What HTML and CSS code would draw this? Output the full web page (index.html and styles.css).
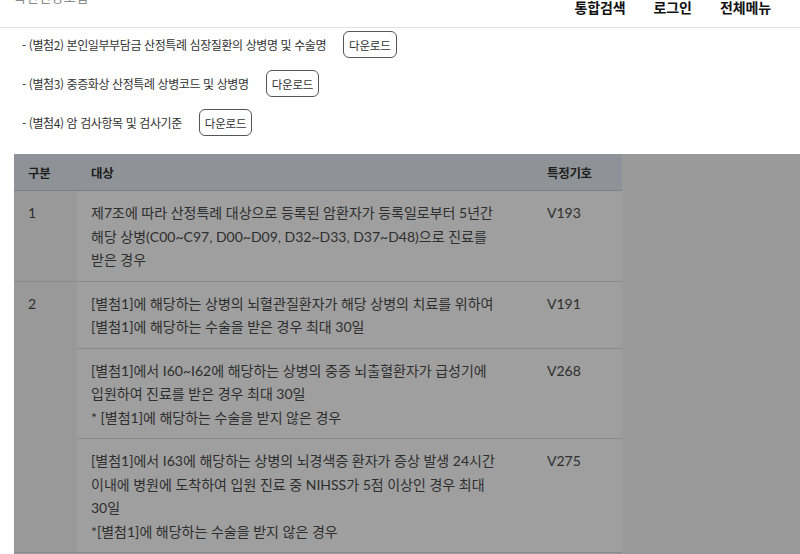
FILE: index.html
```html
<!DOCTYPE html>
<html lang="ko">
<head>
<meta charset="utf-8">
<title>산정특례</title>
<link rel="stylesheet" href="styles.css">
</head>
<body>
<header class="topbar">
  <div class="logo">국민건강보험</div>
  <nav class="gnb">
    <a class="gnb-item">통합검색</a>
    <a class="gnb-item">로그인</a>
    <a class="gnb-item">전체메뉴</a>
  </nav>
</header>
<ul class="files">
  <li class="file"><span class="file-name">- (별첨2) 본인일부부담금 산정특례 심장질환의 상병명 및 수술명</span><button class="btn">다운로드</button></li>
  <li class="file"><span class="file-name">- (별첨3) 중증화상 산정특례 상병코드 및 상병명</span><button class="btn">다운로드</button></li>
  <li class="file"><span class="file-name">- (별첨4) 암 검사항목 및 검사기준</span><button class="btn">다운로드</button></li>
</ul>
<section class="dim">
  <table class="tbl">
    <colgroup><col class="c1"><col class="c2"><col class="c3"></colgroup>
    <thead>
      <tr><th>구분</th><th>대상</th><th>특정기호</th></tr>
    </thead>
    <tbody>
      <tr>
        <td class="no">1</td>
        <td>제7조에 따라 산정특례 대상으로 등록된 암환자가 등록일로부터 5년간<br>해당 상병(C00~C97, D00~D09, D32~D33, D37~D48)으로 진료를<br>받은 경우</td>
        <td>V193</td>
      </tr>
      <tr>
        <td class="no" rowspan="3">2</td>
        <td>[별첨1]에 해당하는 상병의 뇌혈관질환자가 해당 상병의 치료를 위하여<br>[별첨1]에 해당하는 수술을 받은 경우 최대 30일</td>
        <td>V191</td>
      </tr>
      <tr>
        <td>[별첨1]에서 I60~I62에 해당하는 상병의 중증 뇌출혈환자가 급성기에<br>입원하여 진료를 받은 경우 최대 30일<br>* [별첨1]에 해당하는 수술을 받지 않은 경우</td>
        <td>V268</td>
      </tr>
      <tr>
        <td>[별첨1]에서 I63에 해당하는 상병의 뇌경색증 환자가 증상 발생 24시간<br>이내에 병원에 도착하여 입원 진료 중 NIHSS가 5점 이상인 경우 최대<br>30일<br>*[별첨1]에 해당하는 수술을 받지 않은 경우</td>
        <td>V275</td>
      </tr>
    </tbody>
  </table>
</section>
</body>
</html>
```

FILE: styles.css
```css
html, body {
  margin: 0;
  padding: 0;
  background: #ffffff;
  font-family: Lato, "Noto Sans CJK KR", sans-serif;
  color: #333;
  overflow: hidden;
}

.topbar {
  display: flex;
  justify-content: space-between;
  align-items: flex-start;
  height: 28px;
  border-bottom: 1px solid #e2e2e2;
  box-sizing: border-box;
  padding: 0 29px 0 14px;
  overflow: hidden;
}

.logo {
  margin-top: -11px;
  font-size: 13px;
  line-height: 16px;
  color: #8a8a8a;
  letter-spacing: 0.5px;
}

.gnb {
  display: flex;
  gap: 28px;
  margin-top: -1px;
}

.gnb-item {
  font-family: "Noto Sans CJK KR", sans-serif;
  font-size: 14px;
  line-height: 16px;
  font-weight: 700;
  color: #111;
  letter-spacing: -0.1px;
}

.files {
  list-style: none;
  margin: 0;
  padding: 3px 0 18px 22px;
  display: flex;
  flex-direction: column;
  gap: 12px;
}

.file {
  display: flex;
  align-items: center;
  gap: 17px;
  height: 27px;
}

.file-name {
  font-family: "Noto Sans CJK KR", sans-serif;
  font-size: 12px;
  color: #333;
  letter-spacing: -0.4px;
}

.btn {
  height: 27px;
  padding: 0 5px;
  border: 1px solid #555;
  border-radius: 6px;
  background: #fff;
  font-family: "Noto Sans CJK KR", sans-serif;
  font-size: 11.5px;
  color: #333;
  letter-spacing: -0.2px;
}

.dim {
  margin-left: 14px;
  background: #9a9a9a;
  height: 400px;
}

.tbl {
  width: 608px;
  border-collapse: collapse;
  font-size: 14px;
  color: #2e2e2e;
}

.c1 { width: 63px; }
.c3 { width: 89px; }

.tbl th {
  background: #8f9296;
  height: 36px;
  padding: 0 14px;
  text-align: left;
  font-family: "Noto Sans CJK KR", sans-serif;
  font-size: 12.5px;
  font-weight: 700;
  color: #1e1e1e;
  letter-spacing: -0.3px;
  border-bottom: 1px solid #7e8185;
}

.tbl td {
  background: #9f9f9f;
  padding: 10px 14px 9px 14px;
  line-height: 23.5px;
  vertical-align: top;
  border-bottom: 1px solid #8a8a8a;
}

.tbl td.no {
  background: #999999;
}
```
